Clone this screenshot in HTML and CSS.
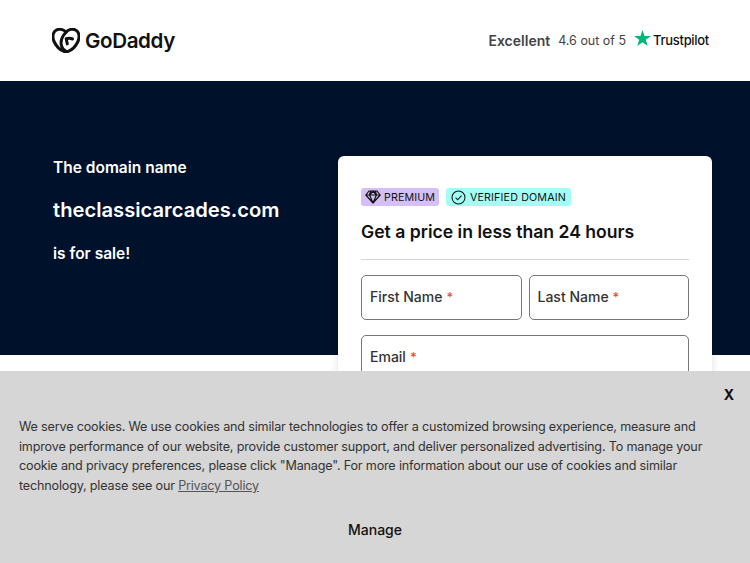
FILE: index.html
```html
<!DOCTYPE html>
<html lang="en">
<head>
<meta charset="utf-8">
<title>theclassicarcades.com is for sale</title>
<link rel="stylesheet" href="styles.css">
</head>
<body>
<header class="topbar">
  <div class="logo">
    <svg class="logo-mark" viewBox="0 0 28 25" width="28" height="25" aria-hidden="true">
      <path d="M14 4.300C11.400 1.100 7 .4 4 2.200.6 4.300 0 9.300 2.300 14c1.900 3.900 5.700 8 9.500 9.300 1.500.5 3 .5 4.400 0 3.800-1.300 7.600-5.400 9.500-9.300C28 9.300 27.400 4.300 24 2.200 21 .4 16.600 1.100 14 4.300Z" fill="none" stroke="#111" stroke-width="3" stroke-linejoin="round"/>
      <path d="M14 4.300C10.800 7.700 8.200 12.600 9.400 17.500c.7 2.700 2.600 4.900 4.800 5.900M20.500 11c-1.900-.8-4.400-.8-6.300-.2l1.100 5.100" fill="none" stroke="#111" stroke-width="3" stroke-linecap="round" stroke-linejoin="round"/>
    </svg>
    <span class="logo-word">GoDaddy</span>
  </div>
  <div class="rating">
    <span class="rating-label">Excellent</span>
    <span class="rating-score">4.6 out of 5</span>
    <span class="trustpilot">
      <svg class="tp-star" viewBox="0 0 20 19" width="17" height="16" aria-hidden="true"><path d="M10 0l2.400 7.200H20l-6.100 4.500 2.300 7.300-6.200-4.500L3.800 19l2.300-7.300L0 7.200h7.600Z" fill="#00b67a"/></svg>
      <span class="trustpilot-word">Trustpilot</span>
    </span>
  </div>
</header>

<main>
  <section class="hero">
    <div class="intro">
      <p class="intro-line">The domain name</p>
      <h1 class="domain">theclassicarcades.com</h1>
      <p class="intro-line">is for sale!</p>
    </div>
    <form class="card">
      <div class="badges">
        <span class="badge badge-premium">
          <svg viewBox="0 0 16 14" width="16" height="14" aria-hidden="true"><path d="M4 1h8l3.200 4L8 13 .8 5ZM.8 5h14.400M5.600 1 4.600 5 8 13l3.400-8-1-4M4.600 5 8 1l3.400 4" fill="none" stroke="#111" stroke-width="1.200" stroke-linejoin="round"/></svg>
          PREMIUM
        </span>
        <span class="badge badge-verified">
          <svg viewBox="0 0 16 16" width="15" height="15" aria-hidden="true"><circle cx="8" cy="8" r="6.900" fill="none" stroke="#111" stroke-width="1.100"/><path d="M4.900 8.200 7.100 10.400 11.200 5.900" fill="none" stroke="#111" stroke-width="1.100"/></svg>
          VERIFIED DOMAIN
        </span>
      </div>
      <h2 class="card-title">Get a price in less than 24 hours</h2>
      <hr class="divider">
      <div class="field-row">
        <div class="field">First Name <span class="req">*</span></div>
        <div class="field">Last Name <span class="req">*</span></div>
      </div>
      <div class="field">Email <span class="req">*</span></div>
    </form>
  </section>
</main>

<aside class="cookies">
  <button class="close" type="button">X</button>
  <p class="cookie-text">We serve cookies. We use cookies and similar technologies to offer a customized browsing experience, measure and improve performance of our website, provide customer support, and deliver personalized advertising. To manage your cookie and privacy preferences, please click "Manage". For more information about our use of cookies and similar technology, please see our <a class="policy" href="#">Privacy Policy</a></p>
  <button class="manage" type="button">Manage</button>
</aside>
</body>
</html>
```
FILE: styles.css
```css
* { box-sizing: border-box; }
html, body { margin: 0; height: 100%; overflow: hidden; }
body { font-family: Inter, "Liberation Sans", sans-serif; background: #fff; color: #111; }

.topbar { height: 81px; padding: 0 41px 0 52px; display: flex; align-items: center; justify-content: space-between; background: #fff; }
.logo { display: flex; align-items: center; gap: 5px; }
.logo-word { font-size: 20.600px; font-weight: 600; letter-spacing: -0.4px; color: #111; }
.rating { display: flex; align-items: center; gap: 8px; color: #444; }
.rating-label { font-size: 14px; font-weight: 600; }
.rating-score { font-size: 12.500px; }
.trustpilot { display: flex; align-items: center; gap: 2px; padding-bottom: 2px; }
.tp-star { position: relative; top: -2px; }
.trustpilot-word { font-size: 13px; font-weight: 500; color: #111; letter-spacing: -0.3px; }

.hero { height: 274px; padding: 75px 38px 0 53px; display: flex; justify-content: space-between; align-items: flex-start; background: #00112c; }
.intro { margin-top: 1px; color: #fff; }
.intro-line { margin: 0; font-size: 15.500px; font-weight: 600; line-height: 22px; }
.domain { margin: 18px 0 20px; font-size: 20.200px; font-weight: 600; line-height: 26px; }

.card { width: 374px; height: 320px; padding: 32px 23px; background: #fff; border-radius: 6px; box-shadow: 0 2px 8px rgba(0, 17, 44, .12); flex: none; }
.badges { display: flex; gap: 7px; }
.badge { display: inline-flex; align-items: center; gap: 3px; height: 18px; padding: 0 4px; border-radius: 3px; font-size: 10.700px; letter-spacing: .1px; color: #111; }
.badge-premium { background: #d4c0f6; }
.badge-verified { padding: 0 5px; gap: 4px; letter-spacing: .15px; background: #a4fdf5; }
.card-title { margin: 14px 0 0; font-size: 17.600px; font-weight: 600; line-height: 24px; color: #111; }
.divider { margin: 15px 0; border: 0; border-top: 1px solid #d6d6d6; }
.field-row { display: flex; gap: 7px; margin-bottom: 15px; }
.field-row .field { flex: 1; }
.field { height: 45px; padding: 0 8px 2px; display: flex; align-items: center; gap: 4px; border: 1px solid #767676; border-radius: 5px; font-size: 14px; font-weight: 500; color: #333; }
.req { color: #e8502a; font-size: 13px; }

.cookies { position: fixed; left: 0; right: 0; bottom: 0; height: 192px; padding: 46px 19px 0; background: #d6d6d6; }
.close { position: absolute; top: 15px; right: 16px; padding: 0; border: 0; background: none; font: 700 14px Inter, sans-serif; color: #111; }
.cookie-text { margin: 0; font-size: 12.600px; letter-spacing: -0.18px; line-height: 19.700px; color: #333; }
.policy { color: #555; }
.manage { display: block; margin: 25px auto 0; padding: 0; border: 0; background: none; font: 500 14px Inter, sans-serif; color: #111; }
```
